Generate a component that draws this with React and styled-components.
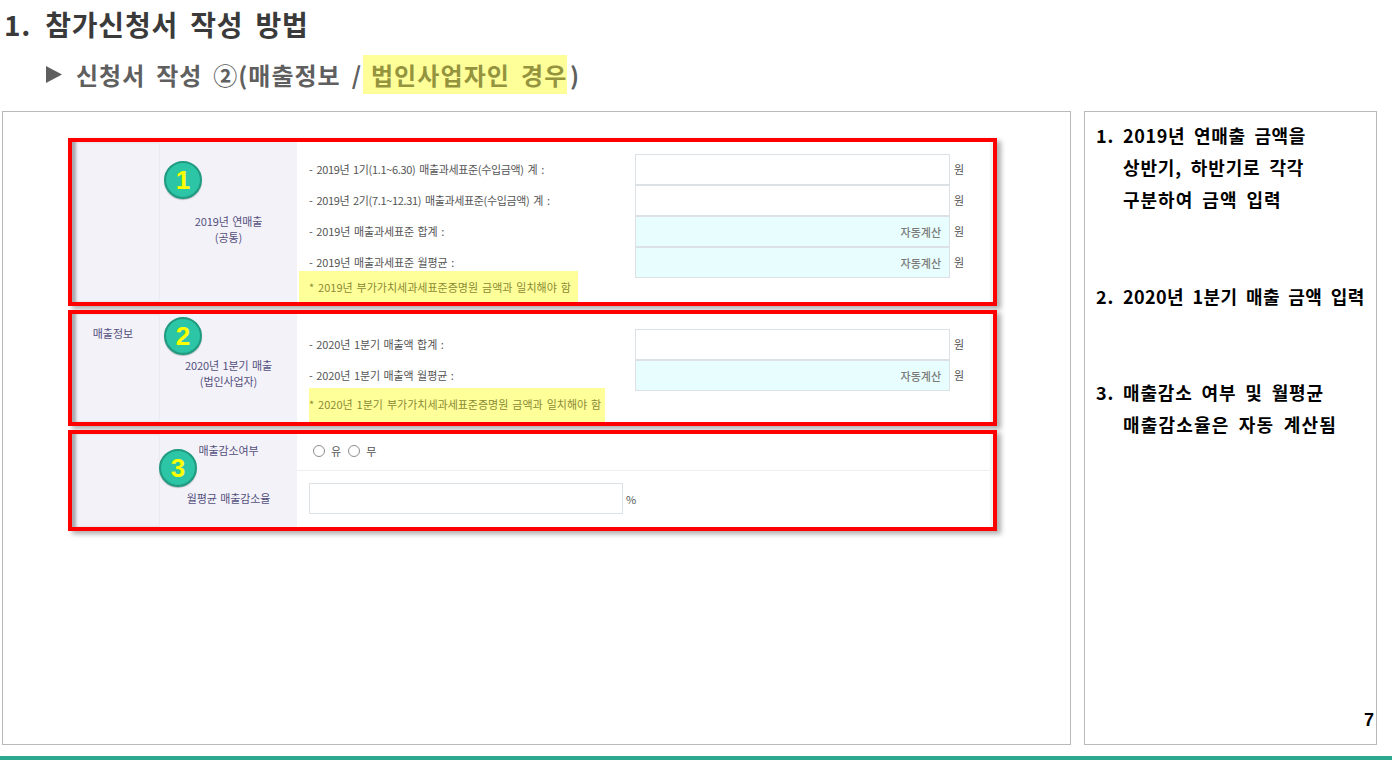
import React from "react";
import styled, { createGlobalStyle } from "styled-components";

const GlobalStyle = createGlobalStyle`
  html, body {
    margin: 0;
    padding: 0;
    background: #fff;
  }
  body {
    font-family: "Noto Sans CJK KR", "Noto Sans", sans-serif;
  }
`;

const Page = styled.div`
  width: 1392px;
  height: 760px;
  display: flex;
  flex-direction: column;
  overflow: hidden;
  background: #fff;
`;

const Header = styled.header`
  height: 111px;
  flex: none;
`;

const Title = styled.h1`
  margin: 0;
  height: 47px;
  padding: 0 0 0 4px;
  display: flex;
  align-items: center;
  gap: 14px;
  font-size: 28px;
  font-weight: 700;
  letter-spacing: 0.8px;
  word-spacing: 5px;
  color: #3a3a3a;
`;

const SubTitle = styled.h2`
  margin: 0;
  height: 54px;
  padding-left: 46px;
  display: flex;
  align-items: center;
  font-size: 24px;
  font-weight: 700;
  letter-spacing: 1px;
  word-spacing: 4.5px;
  color: #5f5f5f;
  white-space: pre;
`;

const Arrow = styled.svg`
  width: 16px;
  height: 17px;
  margin-right: 14px;
  flex: none;
`;

const Marked = styled.span`
  display: inline-flex;
  align-items: center;
  width: 204px;
  height: 39px;
  margin: 0 3px 0 1px;
  padding-left: 8px;
  box-sizing: border-box;
  letter-spacing: 1.1px;
  color: #94943f;
  background: #ffff99;
`;

const Main = styled.main`
  height: 634px;
  flex: none;
  padding-left: 2px;
  display: flex;
  gap: 13px;
`;

const SlidePanel = styled.section`
  width: 1069px;
  box-sizing: border-box;
  border: 1px solid #b9b9b9;
  padding: 26px 0 0 65px;
`;

const NotePanel = styled.aside`
  position: relative;
  width: 293px;
  box-sizing: border-box;
  border: 1px solid #b9b9b9;
  padding: 7px 0 0 11px;
`;

const Sheet = styled.div`
  width: 929px;
  display: flex;
  flex-direction: column;
  gap: 4px;
`;

const Section = styled.div`
  position: relative;
  height: ${(props) => props.height}px;
  box-sizing: border-box;
  display: grid;
  grid-template-columns: 87px 138px 1fr;
  grid-template-rows: minmax(0, 1fr);
  background: #fff;
  border: 4px solid #ff0000;
  box-shadow: 4px 3px 5px rgba(0, 0, 0, 0.32);
`;

const GroupCell = styled.div`
  background: #f3f2f9;
  box-shadow: inset 5px 0 3px -1px rgba(0, 0, 0, 0.3);
  padding-top: ${(props) => props.top || 0}px;
  padding-right: 5px;
  text-align: center;
  font-size: 11px;
  line-height: 16px;
  color: #54507c;
`;

const LabelCell = styled.div`
  background: #f3f2f9;
  border-left: 1px solid #ebeaf2;
  padding-top: ${(props) => props.top || 0}px;
  text-align: center;
  font-size: 11px;
  line-height: 16px;
  letter-spacing: -0.1px;
  word-spacing: 1px;
  color: #54507c;
`;

const LabelGap = styled.div`
  height: ${(props) => props.size}px;
`;

const ContentCell = styled.div`
  display: flex;
  flex-direction: column;
  padding-top: ${(props) => props.top || 0}px;
  border-right: 3px solid #f3f3f3;
`;

const FieldRow = styled.div`
  height: 31px;
  padding-left: 12px;
  display: grid;
  grid-template-columns: 326px 315px auto;
  align-items: center;
  font-size: 11px;
  color: #555;
`;

const RowText = styled.span`
  padding-bottom: 2px;
  letter-spacing: ${(props) => (props.long ? "-0.35px" : "-0.1px")};
  word-spacing: ${(props) => (props.long ? "1.8px" : "1.2px")};
`;

const Field = styled.div`
  height: 31px;
  box-sizing: border-box;
  padding-right: 8px;
  display: flex;
  align-items: center;
  justify-content: flex-end;
  border: 1px solid #dbe1e4;
  background: ${(props) => (props.auto ? "#e8fdfe" : "#fff")};
  font-weight: 500;
  color: #7b7b7b;
`;

const Unit = styled.span`
  padding: 0 0 2px 4px;
`;

const Note = styled.div`
  position: relative;
  z-index: 1;
  align-self: flex-start;
  box-sizing: border-box;
  height: ${(props) => props.height}px;
  margin: ${(props) => props.shift}px 0 0 ${(props) => props.left}px;
  padding: 0 ${(props) => props.tail}px ${(props) => props.lift}px ${(props) => 12 - props.left}px;
  display: flex;
  align-items: center;
  background: rgba(255, 255, 0, 0.4);
  font-size: 11px;
  letter-spacing: 0;
  word-spacing: 1.5px;
  color: #8a8a35;
`;

const RadioRow = styled.div`
  height: 37px;
  padding: 0 0 3px 16px;
  display: flex;
  align-items: center;
  gap: 6px;
  border-bottom: 1px solid #eeeeee;
  box-sizing: border-box;
  font-size: 11px;
  color: #555;
`;

const RadioDot = styled.span`
  width: 10px;
  height: 10px;
  border: 1px solid #8d8d8d;
  border-radius: 50%;
  background: #fff;
`;

const RadioText = styled.span`
  margin-right: 1px;
`;

const RateRow = styled.div`
  padding: 12px 0 0 12px;
  display: flex;
  align-items: center;
  font-size: 11px;
  color: #555;
`;

const RateField = styled.div`
  width: 314px;
  height: 31px;
  box-sizing: border-box;
  border: 1px solid #dbe1e4;
  margin-right: 3px;
`;

const Badge = styled.div`
  position: absolute;
  left: ${(props) => props.x}px;
  top: ${(props) => props.y}px;
  width: 38px;
  height: 38px;
  box-sizing: border-box;
  display: flex;
  align-items: center;
  justify-content: center;
  border-radius: 50%;
  border: 2px solid #209a80;
  background: radial-gradient(circle at 50% 48%, #2cc5a6 0 66%, #27ab90 80%, #6fcbb7 100%);
  box-shadow: 0 1px 1px rgba(0, 0, 0, 0.25);
  font-family: "Liberation Sans", sans-serif;
  font-size: 26px;
  font-weight: 700;
  color: #ffff00;
  z-index: 2;
`;

const NoteItem = styled.div`
  height: ${(props) => props.height}px;
  display: grid;
  grid-template-columns: 27px 1fr;
  font-size: 18px;
  font-weight: 700;
  line-height: 32px;
  letter-spacing: 0.8px;
  word-spacing: 4px;
  color: #000;
`;

const Line = styled.div`
  white-space: nowrap;
  letter-spacing: ${(props) => props.spacing}px;
`;

const PageNumber = styled.div`
  position: absolute;
  right: 2px;
  bottom: 13px;
  font-size: 18px;
  font-weight: 700;
  font-family: "Liberation Sans", sans-serif;
  color: #000;
`;

const BottomBar = styled.div`
  height: 4px;
  margin-top: 11px;
  flex: none;
  background: #2ba88d;
`;

const incomeRows = [
  { text: "- 2019년 1기(1.1~6.30) 매출과세표준(수입금액) 계 :", long: true },
  { text: "- 2019년 2기(7.1~12.31) 매출과세표준(수입금액) 계 :", long: true },
  { text: "- 2019년 매출과세표준 합계 :", auto: true },
  { text: "- 2019년 매출과세표준 월평균 :", auto: true },
];

const quarterRows = [
  { text: "- 2020년 1분기 매출액 합계 :" },
  { text: "- 2020년 1분기 매출액 월평균 :", auto: true },
];

const notes = [
  {
    no: "1.",
    height: 161,
    lines: [
      { text: "2019년 연매출 금액을", spacing: 0.65 },
      { text: "상반기, 하반기로 각각", spacing: 0.85 },
      { text: "구분하여 금액 입력", spacing: 1 },
    ],
  },
  { no: "2.", height: 96, lines: [{ text: "2020년 1분기 매출 금액 입력", spacing: 0.4 }] },
  {
    no: "3.",
    height: 64,
    lines: [
      { text: "매출감소 여부 및 월평균", spacing: 0.85 },
      { text: "매출감소율은 자동 계산됨", spacing: 1.2 },
    ],
  },
];

const Rows = ({ rows }) =>
  rows.map((row) => (
    <FieldRow key={row.text}>
      <RowText long={row.long}>{row.text}</RowText>
      <Field auto={row.auto}>{row.auto ? "자동계산" : ""}</Field>
      <Unit>원</Unit>
    </FieldRow>
  ));

const App = () => {
  return (
    <Page>
      <GlobalStyle />
      <Header>
        <Title>
          <span>1.</span>
          <span>참가신청서 작성 방법</span>
        </Title>
        <SubTitle>
          <Arrow viewBox="0 0 16 17">
            <polygon points="0,0 16,8.5 0,17" fill="#5f5f5f" />
          </Arrow>
          신청서 작성 ②(매출정보 /<Marked>법인사업자인 경우</Marked>)
        </SubTitle>
      </Header>
      <Main>
        <SlidePanel>
          <Sheet>
            <Section height={168}>
              <GroupCell />
              <LabelCell top={71}>
                2019년 연매출
                <br />
                (공통)
              </LabelCell>
              <ContentCell top={12}>
                <Rows rows={incomeRows} />
                <Note height={35} shift={-7} left={2} lift={0} tail={7}>
                  * 2019년 부가가치세과세표준증명원 금액과 일치해야 함
                </Note>
              </ContentCell>
              <Badge x={92} y={19}>
                1
              </Badge>
            </Section>
            <Section height={116}>
              <GroupCell top={11}>매출정보</GroupCell>
              <LabelCell top={43}>
                2020년 1분기 매출
                <br />
                (법인사업자)
              </LabelCell>
              <ContentCell top={15}>
                <Rows rows={quarterRows} />
                <Note height={34} shift={-3} left={12} lift={3} tail={4}>
                  * 2020년 1분기 부가가치세과세표준증명원 금액과 일치해야 함
                </Note>
              </ContentCell>
              <Badge x={92} y={3}>
                2
              </Badge>
            </Section>
            <Section height={101}>
              <GroupCell />
              <LabelCell top={8}>
                매출감소여부
                <LabelGap size={32} />
                월평균 매출감소율
              </LabelCell>
              <ContentCell>
                <RadioRow>
                  <RadioDot />
                  <RadioText>유</RadioText>
                  <RadioDot />
                  <RadioText>무</RadioText>
                </RadioRow>
                <RateRow>
                  <RateField />
                  <span>%</span>
                </RateRow>
              </ContentCell>
              <Badge x={87} y={15}>
                3
              </Badge>
            </Section>
          </Sheet>
        </SlidePanel>
        <NotePanel>
          {notes.map((note) => (
            <NoteItem key={note.no} height={note.height}>
              <span>{note.no}</span>
              <div>
                {note.lines.map((line) => (
                  <Line key={line.text} spacing={line.spacing}>
                    {line.text}
                  </Line>
                ))}
              </div>
            </NoteItem>
          ))}
          <PageNumber>7</PageNumber>
        </NotePanel>
      </Main>
      <BottomBar />
    </Page>
  );
};

export default App;
